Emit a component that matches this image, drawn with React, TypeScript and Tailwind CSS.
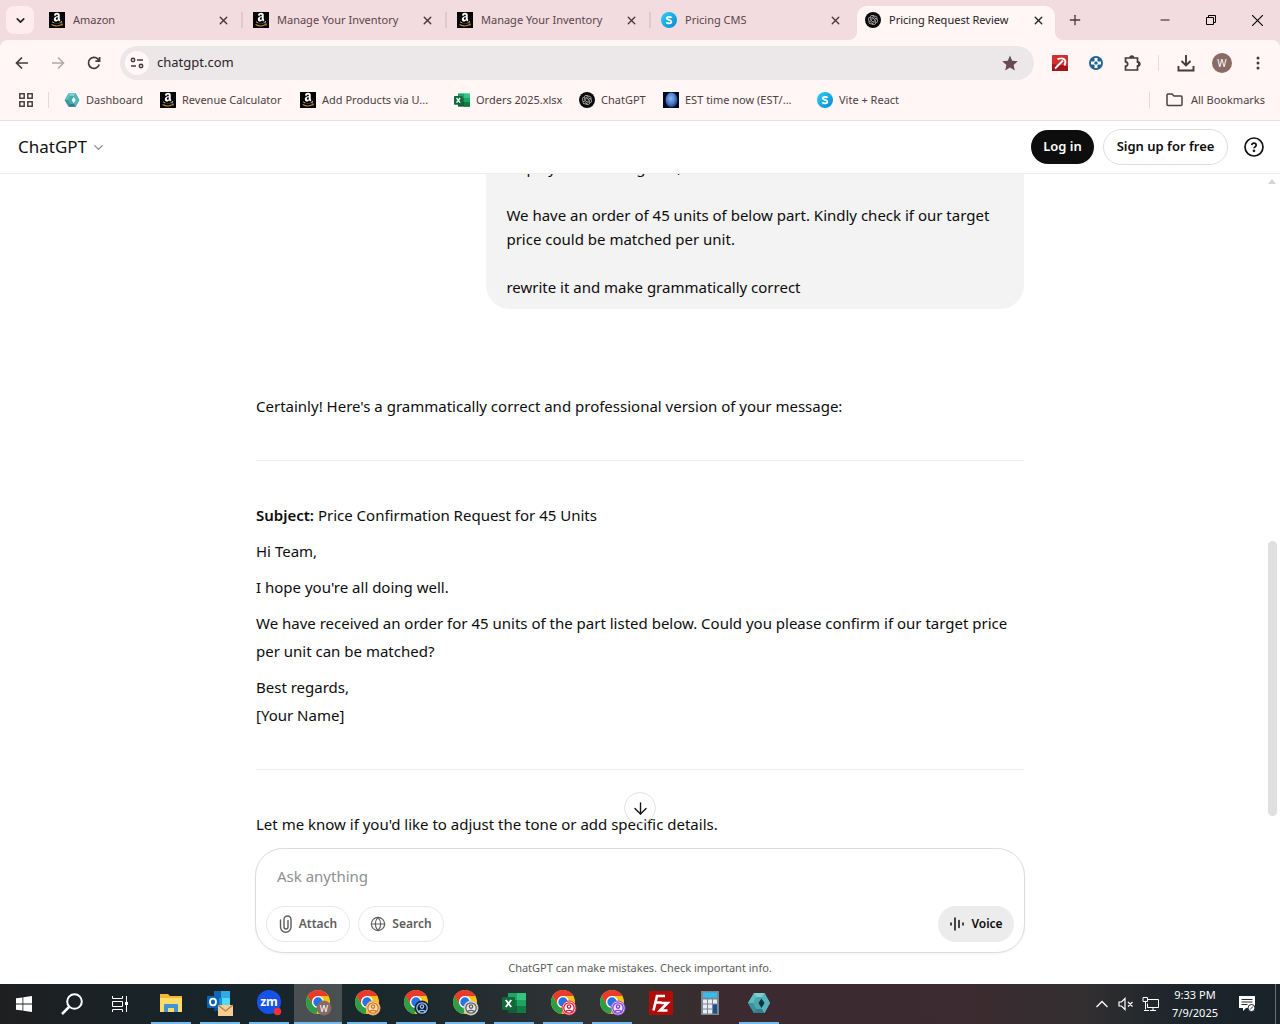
import React from "react";
import { FaAmazon } from "react-icons/fa";
import { RiOpenaiFill } from "react-icons/ri";
import { ArrowDown, ChevronDown, Globe, Minus, Plus, X } from "lucide-react";

function AmazonIcon() {
  return (
    <svg viewBox="0 0 16 16" className="size-4 shrink-0" aria-hidden="true">
      <rect width="16" height="16" fill="#050505" />
      <svg x="2" y="0" width="12" height="15" viewBox="0 0 448 512" preserveAspectRatio="none">
        <FaAmazon color="#fff" size={448} />
      </svg>
      <path d="M2 11.200h12v4.600H2z" fill="#050505" />
      <path d="M2.600 12.400q5.200 3 10.200.2" fill="none" stroke="#c98c25" strokeWidth="1.1" />
      <path d="M11.600 11.900h1.900l-.5 1.800" fill="none" stroke="#c98c25" strokeWidth=".8" />
    </svg>
  );
}

function OpenAiIcon() {
  return (
    <span className="grid size-4 shrink-0 place-items-center rounded-full bg-[#0b0b0b] text-[#c9c9c9]">
      <RiOpenaiFill size={12} aria-hidden="true" />
    </span>
  );
}

function SIcon() {
  return (
    <svg viewBox="0 0 16 16" className="size-4 shrink-0" aria-hidden="true">
      <defs>
        <linearGradient id="s-sky" x1="0" x2="1" y1="0" y2="1">
          <stop offset="0" stopColor="#2bd0f8" />
          <stop offset="1" stopColor="#0a86cf" />
        </linearGradient>
      </defs>
      <circle cx="8" cy="8" r="8" fill="url(#s-sky)" />
      <path d="M10.6 5.8C10 4.700 6 4.300 5.700 6.200c-.2 2 4.800 1.500 4.700 3.700-.2 2-4.200 1.700-5 .3" fill="none" stroke="#fff" strokeWidth="1.8" />
    </svg>
  );
}

function HexIcon({ large = false }: { large?: boolean }) {
  return (
    <svg viewBox="0 0 24 24" className={large ? "size-6" : "size-4 shrink-0"} aria-hidden="true">
      <path d="M7 2h10.500L23 12l-5.500 10H7L1 12z" fill="#4ba9ae" />
      <path d="M7 2h10.500L15 6H9z" fill="#7dd0ce" />
      <path d="M7 2l2 4-3 6H1z" fill="#5fbcbe" />
      <path d="M1 12h5l3 6-2 4z" fill="#3a929b" />
      <path d="M9 18h6l2.500 4H7z" fill="#2f808c" />
      <path d="M17.500 2L23 12l-5.500 10L15 18V6z" fill="#58b4ba" />
      <path d="M14.500 7.500l3 4.500-3 5-3-5z" fill={large ? "#12303f" : "#e9ffff"} />
    </svg>
  );
}

function ExcelIcon({ large = false }: { large?: boolean }) {
  return (
    <svg viewBox="0 0 24 24" className={large ? "size-6" : "size-4 shrink-0"} aria-hidden="true">
      <path d="M6 2h9v7H6z" fill="#21a366" />
      <path d="M15 2h9v7h-9z" fill="#33c481" />
      <path d="M6 9h9v6H6z" fill="#107c41" />
      <path d="M15 9h9v6h-9z" fill="#21a366" />
      <path d="M6 15h18v7H6z" fill="#185c37" />
      <path d="M15 15h9v7h-9z" fill="#107c41" />
      <rect y="6" width="13" height="13" rx="1" fill="#0e6b39" />
      <path d="M3.800 9l5.400 7M9.200 9l-5.400 7" stroke="#fff" strokeWidth="1.900" />
    </svg>
  );
}

function PlanetIcon() {
  return (
    <svg viewBox="0 0 16 16" className="size-4 shrink-0" aria-hidden="true">
      <defs>
        <radialGradient id="planet" cx=".45" cy=".4" r=".65">
          <stop offset="0" stopColor="#8db8f5" />
          <stop offset=".6" stopColor="#4474c4" />
          <stop offset="1" stopColor="#12204c" />
        </radialGradient>
      </defs>
      <rect width="16" height="16" fill="#060a1c" />
      <ellipse cx="8.500" cy="8" rx="6" ry="7.500" fill="url(#planet)" />
    </svg>
  );
}

function ChromeIcon({ badge, fill, ink, letter }: { badge: string; fill: string; ink: string; letter?: string }) {
  return (
    <svg viewBox="0 0 28 28" className="ml-0.5 size-7" aria-hidden="true">
      <circle cx="13" cy="13" r="12" fill="#fbc116" />
      <path d="M2.600 7A12 12 0 0 1 23.400 7H13a6 6 0 0 0-5.200 9z" fill="#ea3a2d" />
      <path d="M2.600 7l5.200 9a6 6 0 0 0 5.200 3l-1.500 5.900A12 12 0 0 1 2.600 7z" fill="#2a9f48" />
      <circle cx="13" cy="13" r="6" fill="#fff" />
      <circle cx="13" cy="13" r="4.700" fill="#2374e8" />
      <circle cx="19" cy="19" r="7" fill={fill} stroke={badge} strokeWidth="1" />
      {letter ? (
        <text x="19" y="22.500" fill="#fff" fontSize="9" textAnchor="middle" fontFamily="Noto Sans, sans-serif">{letter}</text>
      ) : (
        <g fill="none" stroke={ink} strokeWidth="1.300">
          <circle cx="19" cy="19" r="5.200" />
          <circle cx="19" cy="17.600" r="1.700" />
          <path d="M15.300 22.600q3.700-2.600 7.400 0" />
        </g>
      )}
    </svg>
  );
}

function FolderIcon() {
  return (
    <svg viewBox="0 0 24 24" className="size-6" aria-hidden="true">
      <path d="M1 3h8l2 2h12v16H1z" fill="#f3b73a" />
      <path d="M1 7h22v14H1z" fill="#ffdb69" />
      <path d="M5 21v-7q0-1 1-1h12q1 0 1 1v7h-4v-4H9v4z" fill="#3f93d6" />
    </svg>
  );
}

function OutlookIcon() {
  return (
    <svg viewBox="0 0 28 28" className="size-7" aria-hidden="true">
      <path d="M8 2h7v7H8z" fill="#1066b5" />
      <path d="M15 2h9v7h-9z" fill="#32a9e7" />
      <path d="M8 9h8v7H8z" fill="#1490df" />
      <path d="M16 9h8v9h-8z" fill="#50d9ff" />
      <path d="M8 16h16v6H8z" fill="#0a4f8e" />
      <rect x="1" y="7" width="12" height="12" rx="1" fill="#0a63b8" />
      <ellipse cx="7" cy="13" rx="3" ry="3.300" fill="none" stroke="#fff" strokeWidth="1.800" />
      <path d="M12 16h15v11H12z" fill="#f6cd92" />
      <path d="M12 16l7.500 6 7.500-6" fill="none" stroke="#b97d3b" strokeWidth="1.200" />
    </svg>
  );
}

function ZoomIcon() {
  return (
    <svg viewBox="0 0 28 28" className="size-7" aria-hidden="true">
      <circle cx="14" cy="13" r="12" fill="#1652e8" />
      <text x="14" y="16.500" fill="#fff" fontSize="12" fontWeight="700" textAnchor="middle" fontFamily="Noto Sans, sans-serif">zm</text>
      <circle cx="22.500" cy="22.500" r="3.700" fill="#f03238" />
    </svg>
  );
}

function FileZillaIcon() {
  return (
    <svg viewBox="0 0 24 24" className="size-6" aria-hidden="true">
      <rect width="24" height="24" rx="1" fill="#b30b08" />
      <path d="M4.500 19.500L8 5h8M6.200 11.500h6.500M11.500 12h7l-7.500 7.500h7.500" fill="none" stroke="#fff" strokeWidth="2.600" />
    </svg>
  );
}

function CalculatorIcon() {
  return (
    <svg viewBox="0 0 24 24" className="size-6" aria-hidden="true">
      <rect x="3" width="18" height="24" fill="#7a8791" />
      <rect x="5" y="1.500" width="14" height="5" fill="#35bdf2" />
      <path d="M5 8.500h4v4H5zM10 8.500h4v4h-4zM15 8.500h4v4h-4zM5 13.500h4v4H5zM10 13.500h4v4h-4zM5 18.500h4v4H5zM10 18.500h4v4h-4z" fill="#e7edf2" />
      <path d="M15 13.500h4v9h-4z" fill="#1c4f93" />
    </svg>
  );
}

const tabs = [
  { title: "Amazon", icon: <AmazonIcon /> },
  { title: "Manage Your Inventory", icon: <AmazonIcon /> },
  { title: "Manage Your Inventory", icon: <AmazonIcon /> },
  { title: "Pricing CMS", icon: <SIcon /> },
];

function TabStrip() {
  return (
    <header className="flex h-10 shrink-0 items-stretch bg-[#f2dce0] text-[11px]">
      <button aria-label="Search tabs" className="ml-1.5 mt-1.5 grid size-7 shrink-0 place-items-center rounded-lg bg-[#ffecee] text-[#222]">
        <ChevronDown size={13} strokeWidth={3} />
      </button>
      <nav aria-label="Tabs" className="ml-[5px] flex min-w-0 flex-1">
        {tabs.map((tab, i) => (
          <div key={i} className="flex min-w-0 max-w-[204px] flex-1 items-center pl-[10px] pr-[13px] text-[#5a4549]">
            {tab.icon}
            <button className="ml-2 min-w-0 flex-1 truncate text-left">{tab.title}</button>
            <button aria-label={"Close " + tab.title} className="text-[#4a3539]">
              <X size={13} strokeWidth={2.500} />
            </button>
            <span className={i < 3 ? "-mr-[13px] ml-[11px] h-4 w-0.5 bg-[#e5c6cc]" : "-mr-[13px] ml-[11px] w-0.5"} />
          </div>
        ))}
        <div className="relative ml-0.5 mt-1.5 flex min-w-0 max-w-[198px] flex-1 items-center rounded-t-[10px] bg-[#fff6f5] pb-1.5 pl-2 pr-[10px] text-[#2a2023]">
          <svg viewBox="0 0 8 8" className="absolute -left-2 bottom-0 size-2" aria-hidden="true"><path d="M8 0v8H0a8 8 0 0 0 8-8z" fill="#fff6f5" /></svg>
          <svg viewBox="0 0 8 8" className="absolute -right-2 bottom-0 size-2" aria-hidden="true"><path d="M0 0v8h8a8 8 0 0 1-8-8z" fill="#fff6f5" /></svg>
          <OpenAiIcon />
          <button className="ml-2 min-w-0 flex-1 truncate text-left">Pricing Request Review</button>
          <button aria-label="Close Pricing Request Review"><X size={13} strokeWidth={2.500} /></button>
        </div>
        <button aria-label="New tab" className="ml-3 text-[#4a3a3d]"><Plus size={16} strokeWidth={2} /></button>
      </nav>
      <div className="flex shrink-0 text-black">
        <button aria-label="Minimize" className="grid w-[46px] place-items-center"><Minus size={14} strokeWidth={1.500} /></button>
        <button aria-label="Restore" className="grid w-[46px] place-items-center">
          <svg viewBox="0 0 10 10" className="size-[10px]" fill="none" stroke="currentColor" aria-hidden="true"><path d="M.5 2.500h7v7h-7zM2.500 2.500v-2h7v7h-2" /></svg>
        </button>
        <button aria-label="Close window" className="grid w-[46px] place-items-center">
          <svg viewBox="0 0 10 10" className="size-[11px]" stroke="currentColor" aria-hidden="true"><path d="M0 0l10 10M10 0L0 10" /></svg>
        </button>
      </div>
    </header>
  );
}

function Toolbar() {
  return (
    <div className="bg-[#f2dce0]">
      <div className="flex h-[46px] items-center rounded-t-lg bg-[#fff6f5] pr-[11px] text-[#47393c]">
        <button aria-label="Back" className="ml-2 grid size-7 place-items-center">
          <svg viewBox="0 0 14 14" className="size-[14px]" fill="none" stroke="currentColor" strokeWidth="1.700" aria-hidden="true"><path d="M13 7H2M7 1.500L1.500 7 7 12.500" /></svg>
        </button>
        <button aria-label="Forward" className="ml-2 grid size-7 place-items-center text-[#b5a6a9]">
          <svg viewBox="0 0 14 14" className="size-[14px]" fill="none" stroke="currentColor" strokeWidth="1.500" aria-hidden="true"><path d="M1 7h11M7 1.500L12.500 7 7 12.500" /></svg>
        </button>
        <button aria-label="Reload" className="ml-2 grid size-7 place-items-center">
          <svg viewBox="0 0 14 14" className="size-[14px]" fill="none" stroke="currentColor" strokeWidth="1.700" aria-hidden="true"><path d="M12.200 8.500a5.500 5.500 0 1 1-1.200-5.400L12.500 5M12.600 1v4.200H8.400" /></svg>
        </button>
        <div className="ml-3 flex h-[34px] min-w-0 flex-1 items-center rounded-full bg-[#ece7e9] pl-[5px] pr-4">
          <button aria-label="View site information" className="grid size-6 place-items-center rounded-full bg-[#fff8f8]">
            <svg viewBox="0 0 14 12" className="h-3 w-[14px]" fill="none" stroke="currentColor" strokeWidth="1.500" aria-hidden="true"><circle cx="3" cy="3" r="1.700" /><path d="M7 3h6M1 9h5" /><circle cx="11" cy="9" r="1.700" /></svg>
          </button>
          <input aria-label="Address" defaultValue="chatgpt.com" className="ml-2 min-w-0 flex-1 bg-transparent text-[13px] text-[#2b2426] outline-none" />
          <button aria-label="Bookmark this tab">
            <svg viewBox="0 0 16 16" className="size-4" aria-hidden="true"><path d="M8 .5l2.200 5.200 5.600.5-4.200 3.700 1.200 5.500L8 12.500l-4.800 2.900 1.200-5.500L.2 6.200l5.600-.5z" fill="#684a52" /></svg>
          </button>
        </div>
        <div className="flex items-center">
          <button aria-label="Pickaxe extension" className="ml-[18px]">
            <svg viewBox="0 0 16 16" className="size-4" aria-hidden="true"><rect width="16" height="16" rx="1" fill="#d0302f" /><path d="M0 9l16 2v5H0z" fill="#a31519" /><path d="M3 13.500L11 5.500M5.500 4.200Q10 2.500 12.200 4.300T12.500 10.500" fill="none" stroke="#fff" strokeWidth="1.900" /></svg>
          </button>
          <button aria-label="Tracker extension" className="ml-[21px]">
            <svg viewBox="0 0 14 14" className="size-[14px]" aria-hidden="true"><circle cx="7" cy="7" r="7" fill="#23648e" /><path d="M5.500 2h3v3.500H12v3H8.500V12h-3V8.500H2v-3h3.500z" fill="#fff" /><path d="M7 5l2 2-2 2-2-2z" fill="#23648e" /></svg>
          </button>
          <button aria-label="Extensions" className="ml-[21px]">
            <svg viewBox="0 0 17 17" className="size-[17px]" fill="none" stroke="currentColor" strokeWidth="1.700" aria-hidden="true"><path d="M1.500 3h12v4.200a1.800 1.800 0 0 1 0 3.600V15h-12v-3.800q2.200-.3 2.200-2.200T1.500 6.800z" /><path d="M6 2.800a1.800 1.800 0 0 1 3.600 0M14 7.200a1.800 1.800 0 0 1 0 3.600" fill="currentColor" /></svg>
          </button>
          <span className="ml-[17px] h-4 w-px bg-[#ecd9db]" />
          <button aria-label="Downloads" className="ml-[18px]">
            <svg viewBox="0 0 18 18" className="size-[18px]" fill="none" stroke="currentColor" strokeWidth="1.900" aria-hidden="true"><path d="M9 1v10.500M4.500 7L9 11.500 13.500 7M1.500 12v4.500h15V12" /></svg>
          </button>
          <button aria-label="Profile" className="ml-[17px] grid size-5 place-items-center rounded-full bg-[#8a6a66] text-[10px] text-white">W</button>
          <button aria-label="More options" className="ml-[15px] grid w-[22px] place-items-center">
            <svg viewBox="0 0 4 14" className="h-[14px] w-1" fill="currentColor" aria-hidden="true"><circle cx="2" cy="2" r="1.500" /><circle cx="2" cy="7" r="1.500" /><circle cx="2" cy="12" r="1.500" /></svg>
          </button>
        </div>
      </div>
    </div>
  );
}

const bookmarks = [
  { label: "Dashboard", icon: <HexIcon />, width: "w-[80px]" },
  { label: "Revenue Calculator", icon: <AmazonIcon />, width: "w-[124px]" },
  { label: "Add Products via U...", icon: <AmazonIcon />, width: "w-[138px]" },
  { label: "Orders 2025.xlsx", icon: <ExcelIcon />, width: "w-[109px]" },
  { label: "ChatGPT", icon: <OpenAiIcon />, width: "w-[68px]" },
  { label: "EST time now (EST/...", icon: <PlanetIcon />, width: "w-[138px]" },
  { label: "Vite + React", icon: <SIcon />, width: "w-[100px]" },
];

function BookmarksBar() {
  return (
    <nav aria-label="Bookmarks" className="flex h-[35px] shrink-0 items-center border-b border-[#eadfe0] bg-[#fff6f5] pb-[6px] pr-[15px] text-[11px] text-[#4d4043]">
      <button aria-label="Apps" className="ml-[19px]">
        <svg viewBox="0 0 14 14" className="size-[14px]" fill="none" stroke="currentColor" strokeWidth="1.500" aria-hidden="true"><path d="M.8.800h4.400v4.400H.8zM8.800.8h4.400v4.400H8.800zM.8 8.800h4.400v4.400H.8zM8.800 8.800h4.400v4.400H8.800z" /></svg>
      </button>
      <span className="mx-[15px] h-4 w-px bg-[#f0d6d9]" />
      <div className="flex min-w-0 flex-1 gap-4">
        {bookmarks.map((b) => (
          <a key={b.label} href="#bookmark" className={"flex shrink-0 items-center gap-1.5 whitespace-nowrap " + b.width}>{b.icon}{b.label}</a>
        ))}
      </div>
      <span className="mr-4 h-4 w-px bg-[#f0d6d9]" />
      <button className="flex items-center gap-2 whitespace-nowrap">
        <svg viewBox="0 0 17 14" className="h-[14px] w-[17px]" fill="none" stroke="currentColor" strokeWidth="1.500" aria-hidden="true"><path d="M1 2q0-1 1-1h4l2 2h7q1 0 1 1v7.500q0 1-1 1H2q-1 0-1-1z" /></svg>
        All Bookmarks
      </button>
    </nav>
  );
}

function ChatHeader() {
  return (
    <div className="flex h-[53px] shrink-0 items-center border-b border-[#ededed] bg-white pl-[18px] pr-4">
      <button className="flex items-center gap-1 text-[17px] text-[#111]">ChatGPT <ChevronDown size={15} className="text-[#8a8a8a]" /></button>
      <div className="ml-auto flex items-center text-[13px] font-semibold">
        <button className="h-[34px] w-[63px] rounded-full bg-[#0d0d0d] text-white">Log in</button>
        <button className="ml-[9px] h-9 w-[125px] rounded-full border border-[#dedede] text-[#0d0d0d]">Sign up for free</button>
        <button aria-label="Help" className="ml-4 grid size-5 place-items-center text-[#111]">
          <svg viewBox="0 0 20 20" className="size-5" fill="none" stroke="currentColor" strokeWidth="1.700" aria-hidden="true"><circle cx="10" cy="10" r="9" /><path d="M7.800 8.200q.2-2 2.200-2t2.200 1.900q0 1.100-1.200 1.800-1 .6-1 1.400" /><circle cx="10" cy="13.800" r=".5" fill="currentColor" /></svg>
        </button>
      </div>
    </div>
  );
}

function Conversation() {
  return (
    <div className="relative min-h-0 flex-1">
      <div className="flex h-full flex-col justify-end overflow-hidden">
        <div className="mx-auto w-full max-w-[768px] shrink-0 pb-[10px] text-[15px] leading-7 text-[#0d0d0d]">
          <div className="ml-auto w-[70%] rounded-3xl bg-[#f3f3f3] px-5 py-2.5 leading-6">
            <p>Hope you are doing well,</p>
            <p className="mt-6">We have an order of 45 units of below part. Kindly check if our target price could be matched per unit.</p>
            <p className="mt-6">rewrite it and make grammatically correct</p>
          </div>
          <p className="mt-[83px]">Certainly! Here's a grammatically correct and professional version of your message:</p>
          <hr className="my-10 border-[#ededed]" />
          <p><strong className="font-semibold">Subject:</strong> Price Confirmation Request for 45 Units</p>
          <p className="mt-2">Hi Team,</p>
          <p className="mt-2">I hope you're all doing well.</p>
          <p className="mt-2">We have received an order for 45 units of the part listed below. Could you please confirm if our target price per unit can be matched?</p>
          <p className="mt-2">Best regards,<br />[Your Name]</p>
          <hr className="my-10 border-[#ededed]" />
          <p>Let me know if you'd like to adjust the tone or add specific details.</p>
        </div>
      </div>
      <button aria-label="Scroll to bottom" className="absolute bottom-6 left-1/2 grid size-8 -translate-x-1/2 place-items-center rounded-full border border-[#e3e3e3] text-[#111]">
        <ArrowDown size={19} strokeWidth={1.700} />
      </button>
      <svg viewBox="0 0 8 5" className="absolute right-1 top-[5px] h-[5px] w-2" aria-hidden="true"><path d="M4 0l4 5H0z" fill="#d6d6d6" /></svg>
      <div className="absolute bottom-8 right-[3px] h-[275px] w-[9px] rounded-full bg-[#e0e0e0]" />
    </div>
  );
}

function Composer() {
  return (
    <div className="shrink-0">
      <form className="mx-auto flex h-[105px] w-full max-w-[770px] flex-col justify-between rounded-[28px] border border-[#dcdcdc] bg-white px-[10px] pb-[10px] pt-[13px] shadow-[0_1px_3px_rgba(0,0,0,0.05)]" onSubmit={(e) => e.preventDefault()}>
        <input aria-label="Ask anything" placeholder="Ask anything" className="ml-[11px] h-7 text-[15px] outline-none placeholder:text-[#8f8f8f]" />
        <div className="flex gap-2 text-[12px] font-semibold text-[#5d5d5d]">
          <button type="button" className="flex h-9 w-[84px] items-center justify-center gap-1.5 rounded-full border border-[#e8e8e8]">
            <svg viewBox="0 0 14 18" className="h-[18px] w-[14px]" fill="none" stroke="currentColor" strokeWidth="1.400" strokeLinecap="round" aria-hidden="true"><path d="M1.500 5v7a5 5 0 0 0 10.500 0V4.500a3.500 3.500 0 0 0-7 0V12a2 2 0 0 0 4 0V5.500" /></svg>
            Attach
          </button>
          <button type="button" className="flex h-9 w-[86px] items-center justify-center gap-1.5 rounded-full border border-[#e8e8e8]">
            <Globe size={16} strokeWidth={1.700} />
            Search
          </button>
          <button type="button" className="ml-auto flex h-9 w-[76px] items-center justify-center gap-1.5 rounded-full bg-[#ececec] text-[#0d0d0d]">
            <svg viewBox="0 0 16 16" className="size-4" stroke="currentColor" strokeWidth="1.500" strokeLinecap="round" aria-hidden="true"><path d="M2 7v2M6 2v12M10 4.500v7M14 7v2" /></svg>
            Voice
          </button>
        </div>
      </form>
      <p className="flex h-[31px] items-center justify-center text-[11px] text-[#5d5d5d]">ChatGPT can make mistakes. Check important info.</p>
    </div>
  );
}

const apps: { name: string; icon: React.ReactNode; open?: boolean; active?: boolean }[] = [
  { name: "File Explorer", icon: <FolderIcon />, open: true },
  { name: "Outlook", icon: <OutlookIcon />, open: true },
  { name: "Zoom", icon: <ZoomIcon />, open: true },
  { name: "Chrome W", icon: <ChromeIcon badge="#8a6a66" fill="#8a6a66" ink="#fff" letter="W" />, active: true },
  { name: "Chrome orange", icon: <ChromeIcon badge="#f3a45c" fill="#fce0bd" ink="#d9731c" />, open: true },
  { name: "Chrome navy", icon: <ChromeIcon badge="#0d1d33" fill="#0d1d33" ink="#9cc3f5" />, open: true },
  { name: "Chrome gray", icon: <ChromeIcon badge="#c9c9c9" fill="#e8e8e8" ink="#5c5c5c" />, open: true },
  { name: "Excel", icon: <ExcelIcon large />, open: true },
  { name: "Chrome red", icon: <ChromeIcon badge="#e02443" fill="#fff" ink="#d9163a" />, open: true },
  { name: "Chrome purple", icon: <ChromeIcon badge="#8f50dc" fill="#efe2ff" ink="#7b3fd0" />, open: true },
  { name: "FileZilla", icon: <FileZillaIcon /> },
  { name: "Calculator", icon: <CalculatorIcon /> },
  { name: "Dashboard", icon: <HexIcon large />, open: true },
];

function Taskbar() {
  return (
    <footer className="flex h-10 shrink-0 bg-[linear-gradient(to_right,#1e1f20_0%,#17242a_15%,#1b282c_32%,#303435_45%,#35302f_52%,#3b2a30_56%,#3c2b30_76%,#332f30_84%,#1b242a_93%,#18222a_100%)] text-white">
      <div className="flex">
        <button aria-label="Start" className="grid w-12 place-items-center">
          <svg viewBox="0 0 16 16" className="size-4" fill="currentColor" aria-hidden="true"><path d="M0 2.300l6.500-.9v6.100H0zM7.300 1.300L16 0v7.500H7.300zM0 8.400h6.500v6.200L0 13.700zM7.300 8.400H16V16l-8.700-1.300z" /></svg>
        </button>
        <button aria-label="Search" className="grid w-12 place-items-center">
          <svg viewBox="0 0 22 22" className="size-[22px]" fill="none" stroke="currentColor" strokeWidth="2" aria-hidden="true"><circle cx="13.500" cy="8.500" r="7.300" /><path d="M8 14l-7 7" strokeWidth="2.500" /></svg>
        </button>
        <button aria-label="Task view" className="grid w-12 place-items-center">
          <svg viewBox="0 0 16 16" className="size-4" fill="none" stroke="currentColor" aria-hidden="true"><path d="M.5 0v2.500h10V0M.5 5.500h10v5H.5zM.5 16v-2.500h10V16M14.500 0v16" /><path d="M13 6h3v3h-3z" fill="currentColor" stroke="none" /></svg>
        </button>
        <div className="ml-[3px] flex gap-px">
          {apps.map((app) => (
            <button key={app.name} aria-label={app.name} className={app.active ? "flex w-12 flex-col items-center bg-[#4a5052]" : "flex w-12 flex-col items-center"}>
              <span className="grid w-full flex-1 place-items-center">{app.icon}</span>
              <span className={app.active ? "h-0.5 w-full bg-[#76b9ed]" : app.open ? "h-0.5 w-10 bg-[#76b9ed]" : "h-0.5 w-10"} />
            </button>
          ))}
        </div>
      </div>
      <div className="ml-auto flex items-center">
        <button aria-label="Show hidden icons">
          <svg viewBox="0 0 16 16" className="size-4" fill="none" stroke="currentColor" strokeWidth="1.300" aria-hidden="true"><path d="M2.500 11L8 5.500l5.500 5.500" /></svg>
        </button>
        <button aria-label="Volume muted" className="ml-2">
          <svg viewBox="0 0 16 16" className="size-4" fill="none" stroke="currentColor" strokeWidth="1.200" aria-hidden="true"><path d="M1 6h2.500L7 2.500v11L3.500 10H1zM10 6l4.500 4.500M14.500 6L10 10.500" /></svg>
        </button>
        <button aria-label="Network" className="ml-2">
          <svg viewBox="0 0 18 16" className="h-4 w-[18px]" fill="none" stroke="currentColor" aria-hidden="true"><path d="M5.500 3.500h11v8h-11v-4M1 1.500h4.500v4H1zM3.500 5.500v8M2 14.500h5M11 11.500v3M8 14.500h6" /></svg>
        </button>
        <div className="w-[70px] text-center text-[11px] leading-[18px]"><div>9:33 PM</div><div>7/9/2025</div></div>
        <button aria-label="Notifications" className="ml-2">
          <svg viewBox="0 0 18 18" className="size-[18px]" aria-hidden="true"><path d="M1 1h16v12H8l-3 3v-3H1z" fill="#fff" /><path d="M3.500 4.500h11M3.500 7h11M3.500 9.500h6" stroke="#222b31" strokeWidth="1" /><circle cx="13.500" cy="13" r="3.500" fill="#fff" stroke="#222b31" /><path d="M12 14.500l3-3" stroke="#222b31" /></svg>
        </button>
        <span className="ml-[19px] mr-1 h-10 w-px bg-[#6c7276]" />
      </div>
    </footer>
  );
}

export default function App() {
  return (
    <div className="flex h-screen flex-col overflow-hidden bg-white font-['Noto_Sans','Open_Sans',sans-serif]">
      <TabStrip />
      <Toolbar />
      <BookmarksBar />
      <main className="flex min-h-0 flex-1 flex-col bg-white">
        <ChatHeader />
        <Conversation />
        <Composer />
      </main>
      <Taskbar />
    </div>
  );
}
